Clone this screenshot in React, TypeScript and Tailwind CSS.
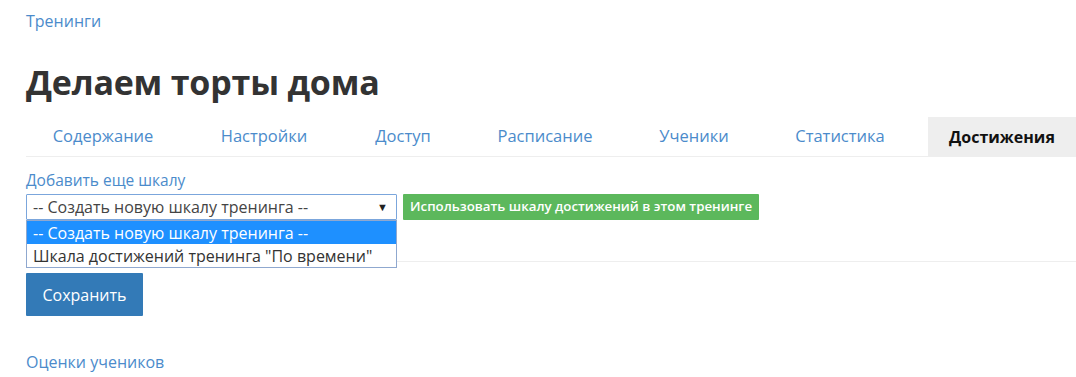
import React from 'react';

const tabs = [
  { label: 'Содержание', w: 'w-[154px]' },
  { label: 'Настройки', w: 'w-[168px]' },
  { label: 'Доступ', w: 'w-[110px]' },
  { label: 'Расписание', w: 'w-[174px]' },
  { label: 'Ученики', w: 'w-[124px]' },
  { label: 'Статистика', w: 'w-[168px]' },
];

const App: React.FC = () => {
  return (
    <div className="w-[1076px] h-[377px] bg-white overflow-hidden font-['Open_Sans',sans-serif] text-[#333]">
      <div className="pl-[26px]">
        <a href="#" className="block pt-[11px] text-[16px] leading-[21px] text-[#4b8bcb]">
          Тренинги
        </a>

        <h1 className="mt-[28px] text-[34px] leading-[44px] font-bold tracking-[-0.2px] text-[#333]">
          Делаем торты дома
        </h1>

        {/* Tabs */}
        <div className="mt-[13px] flex h-[40px] border-b border-[#eee]">
          {tabs.map((t) => (
            <a key={t.label} href="#" className={`${t.w} flex items-center justify-center text-[16.5px] text-[#4b8bcb]`}>
              {t.label}
            </a>
          ))}
          <a href="#" className="ml-auto w-[148px] flex items-center justify-center bg-[#eee] text-[16px] font-bold text-[#111]">
            Достижения
          </a>
        </div>

        {/* Add scale */}
        <div className="mt-[13px]">
          <a href="#" className="block text-[15.5px] leading-[20px] text-[#4b8bcb]">
            Добавить еще шкалу
          </a>
          <div className="mt-[4px] flex items-center gap-[6px]">
            <div className="relative">
              <div className="w-[371px] h-[26px] border border-[#7ba6dc] rounded-[1px] flex items-center pl-[6px] pr-[8px] text-[16px] text-[#444]">
                <span className="flex-1">-- Создать новую шкалу тренинга --</span>
                <span className="text-[11px] text-[#222]">▼</span>
              </div>
              <div className="absolute left-0 top-[26px] z-10 w-[371px] border border-[#8fa8cf] bg-white text-[16px]">
                <div className="h-[23px] flex items-center pl-[6px] bg-[#1e90ff] text-white">-- Создать новую шкалу тренинга --</div>
                <div className="h-[23px] flex items-center pl-[6px] text-[#333]">Шкала достижений тренинга "По времени"</div>
              </div>
            </div>
            <button className="h-[26px] px-[7px] bg-[#5cb85c] text-white text-[13.3px] font-semibold rounded-[1px]">
              Использовать шкалу достижений в этом тренинге
            </button>
          </div>
        </div>

        <div className="mt-[41px] border-t border-[#eee]" />

        <button className="mt-[11px] w-[117px] h-[43px] bg-[#337ab7] text-white text-[16px] rounded-[1px]">
          Сохранить
        </button>

        <a href="#" className="block mt-[36px] text-[16px] leading-[20px] text-[#4b8bcb]">
          Оценки учеников
        </a>
      </div>
    </div>
  );
};

export default App;
